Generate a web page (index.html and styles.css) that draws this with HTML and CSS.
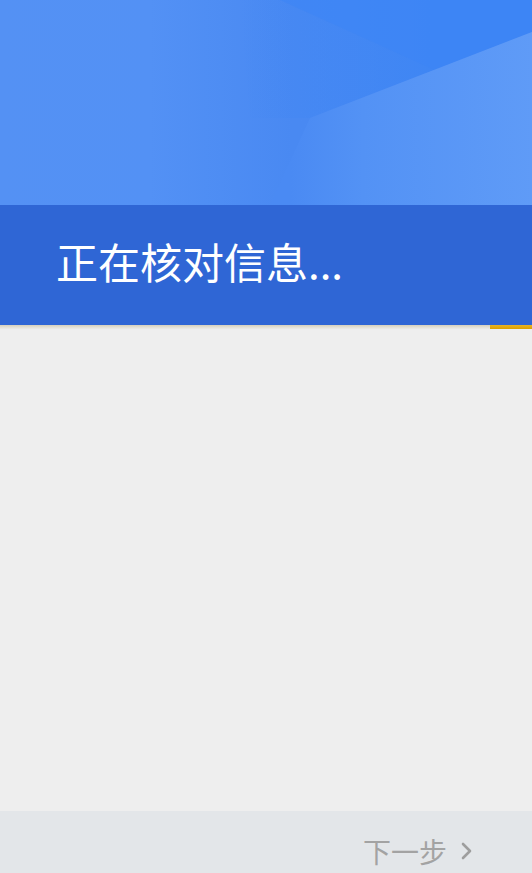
FILE: index.html
```html
<!DOCTYPE html>
<html lang="zh-CN">
<head>
<meta charset="utf-8">
<title>正在核对信息</title>
<link rel="stylesheet" href="styles.css">
</head>
<body>
<div class="page">
  <div class="hero">
    <svg class="hero-art" viewBox="0 0 532 205" preserveAspectRatio="none" xmlns="http://www.w3.org/2000/svg">
      <defs>
        <linearGradient id="base" gradientUnits="userSpaceOnUse" x1="0" y1="0" x2="532" y2="0">
          <stop offset="0" stop-color="#5491f4"/>
          <stop offset="0.28" stop-color="#5391f5"/>
          <stop offset="0.55" stop-color="#4989f2"/>
          <stop offset="1" stop-color="#4a8af3"/>
        </linearGradient>
        <linearGradient id="dark" gradientUnits="userSpaceOnUse" x1="240" y1="0" x2="430" y2="0">
          <stop offset="0" stop-color="#3f86f4" stop-opacity="0"/>
          <stop offset="1" stop-color="#3f86f4" stop-opacity="1"/>
        </linearGradient>
        <linearGradient id="light" gradientUnits="userSpaceOnUse" x1="290" y1="0" x2="532" y2="0">
          <stop offset="0" stop-color="#4a8af3"/>
          <stop offset="0.3" stop-color="#5392f5"/>
          <stop offset="1" stop-color="#5f9bf7"/>
        </linearGradient>
      </defs>
      <rect x="0" y="0" width="532" height="205" fill="url(#base)"/>
      <polygon points="240,0 532,0 532,32 310,118 250,118" fill="url(#dark)"/>
      <polygon points="280,0 532,0 532,32 435,70" fill="#3c85f5" opacity="0.55"/>
      <polygon points="310,118 532,32 532,205 270,205" fill="url(#light)"/>
    </svg>
  </div>
  <div class="band">
    <h1 class="title">正在核对信息...</h1>
  </div>
  <div class="progress-row">
    <div class="progress-bar"></div>
  </div>
  <div class="content"></div>
  <div class="footer">
    <button class="next" type="button">
      <span class="next-label">下一步</span>
      <svg class="chev" viewBox="0 0 12 18" xmlns="http://www.w3.org/2000/svg">
        <polyline points="2,2 9,9 2,16" fill="none" stroke="#9e9e9e" stroke-width="2.6" stroke-linecap="round" stroke-linejoin="round"/>
      </svg>
    </button>
  </div>
</div>
</body>
</html>
```

FILE: styles.css
```css
html, body {
  margin: 0;
  padding: 0;
}
body {
  font-family: "Noto Sans CJK SC", "Noto Sans", sans-serif;
  background: #eeeeee;
}
.page {
  width: 532px;
  height: 873px;
  display: flex;
  flex-direction: column;
  overflow: hidden;
}
.hero {
  height: 205px;
  flex: none;
}
.hero-art {
  display: block;
  width: 100%;
  height: 100%;
}
.band {
  height: 120px;
  flex: none;
  background: #2f66d5;
  display: flex;
  align-items: center;
  padding: 0 0 8px 56px;
  box-sizing: border-box;
}
.title {
  margin: 0;
  color: #ffffff;
  font-size: 42px;
  font-weight: 400;
  line-height: 1;
}
.progress-row {
  height: 4px;
  flex: none;
  display: flex;
  justify-content: flex-end;
  background: linear-gradient(#d6cfbc, #e4e1d8 60%, #ecebe8);
}
.progress-bar {
  width: 42px;
  height: 4px;
  background: linear-gradient(#e8b226, #dba000);
}
.content {
  flex: 1;
  background: #eeeeee;
}
.footer {
  height: 62px;
  flex: none;
  background: #e3e6e9;
  display: flex;
  justify-content: flex-end;
  align-items: flex-start;
  padding: 26px 59px 0 0;
  box-sizing: border-box;
}
.next {
  display: flex;
  align-items: center;
  gap: 14px;
  border: 0;
  background: none;
  padding: 0;
  font-family: inherit;
  cursor: pointer;
}
.next-label {
  color: #a3a3a3;
  font-size: 28px;
  line-height: 1;
}
.chev {
  width: 12px;
  height: 18px;
  display: block;
}
```
